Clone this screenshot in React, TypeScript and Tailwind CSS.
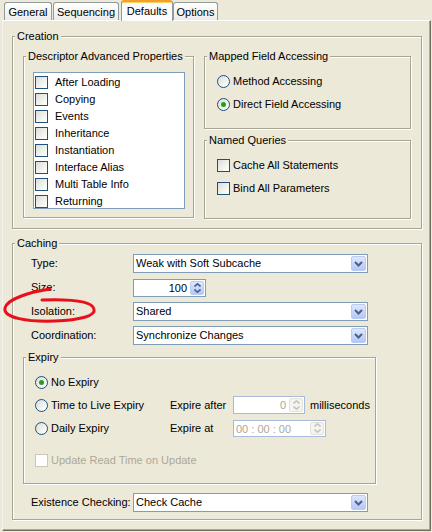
import type { ReactNode } from "react";

const DESCRIPTOR_PROPS = [
  "After Loading",
  "Copying",
  "Events",
  "Inheritance",
  "Instantiation",
  "Interface Alias",
  "Multi Table Info",
  "Returning",
];

function Checkbox({ disabled }: { disabled?: boolean }) {
  if (disabled)
    return <span className="h-[13px] w-[13px] shrink-0 border border-[#cac8bb] bg-white" />;
  return (
    <span className="h-[13px] w-[13px] shrink-0 border border-[#1c5180] bg-linear-to-br from-[#dcdcd7] via-[#f0f0ea] to-white" />
  );
}

function Radio({ checked }: { checked?: boolean }) {
  return (
    <span className="flex h-[13px] w-[13px] shrink-0 items-center justify-center rounded-full border border-[#1c5180] bg-linear-to-br from-[#dcdcd7] via-[#f0f0ea] to-white">
      {checked && <span className="h-[5px] w-[5px] rounded-full bg-[#21a121]" />}
    </span>
  );
}

function Group({
  title,
  className,
  children,
}: {
  title: string;
  className: string;
  children?: ReactNode;
}) {
  return (
    <div
      className={`relative shrink-0 border border-[#a8a596] shadow-[1px_1px_0_#fff,inset_1px_1px_0_#fff] ${className}`}
    >
      <span className="absolute -top-[7px] left-[2px] bg-[#ece9d8] px-[2px] leading-[13px]">
        {title}
      </span>
      {children}
    </div>
  );
}

function Chevron({ up, color }: { up?: boolean; color: string }) {
  return (
    <svg width="7" height="4" viewBox="0 0 7 4">
      <path
        d={up ? "M0.5 3.5 L3.5 0.8 L6.5 3.5" : "M0.5 0.5 L3.5 3.2 L6.5 0.5"}
        fill="none"
        stroke={color}
        strokeWidth="1.6"
      />
    </svg>
  );
}

function Combo({ value }: { value: string }) {
  return (
    <div className="flex h-[19px] w-[235px] shrink-0 border border-[#7f9db9] bg-white p-px">
      <span className="flex-1 pl-[1px] leading-[15px]">{value}</span>
      <span className="flex w-[15px] items-center justify-center rounded-[2px] border border-[#bccbf0] bg-linear-to-b from-[#dde7fe] to-[#b4c8f6]">
        <svg width="9" height="6" viewBox="0 0 9 6">
          <path d="M1 1 L4.5 4.5 L8 1" fill="none" stroke="#4d6185" strokeWidth="2" />
        </svg>
      </span>
    </div>
  );
}

function Spinner({
  value,
  width,
  height,
  disabled,
  left,
}: {
  value: string;
  width: string;
  height: string;
  disabled?: boolean;
  left?: boolean;
}) {
  return (
    <div
      className={`flex shrink-0 border bg-white p-px ${width} ${height} ${
        disabled ? "border-[#a9bbd9] text-[#aca899]" : "border-[#7f9db9]"
      }`}
    >
      <span
        className={`flex-1 leading-[14px] ${left ? "pl-[1px] text-left" : "pr-[3px] text-right"}`}
      >
        {value}
      </span>
      <span
        className={`flex w-[14px] flex-col items-center justify-center gap-[2px] rounded-[2px] border ${
          disabled
            ? "border-[#e3e3dc] bg-[#f4f4f0]"
            : "border-[#bccbf0] bg-linear-to-b from-[#dde7fe] to-[#b4c8f6]"
        }`}
      >
        <Chevron up color={disabled ? "#c9c7ba" : "#4d6185"} />
        <Chevron color={disabled ? "#c9c7ba" : "#4d6185"} />
      </span>
    </div>
  );
}

function FieldRow({ label, children }: { label: string; children: ReactNode }) {
  return (
    <div className="flex h-[19px] items-center">
      <span className="w-[120px] shrink-0 pl-[18px]">{label}</span>
      {children}
    </div>
  );
}

export default function App() {
  return (
    <div className="relative h-[532px] w-[432px] overflow-hidden bg-[#ece9d8] font-['Liberation_Sans',Arial,sans-serif] text-[11px] text-black">
      {/* tab strip */}
      <div className="flex h-[20px] items-end pl-[4px]">
        <div className="h-[18px] w-[48px] rounded-t-[3px] border border-b-0 border-[#919b9c] bg-linear-to-b from-white to-[#ecebe6] pt-[3px] text-center leading-[13px]">
          General
        </div>
        <div className="ml-[1px] h-[18px] w-[66px] rounded-t-[3px] border border-b-0 border-[#919b9c] bg-linear-to-b from-white to-[#ecebe6] pt-[3px] text-center leading-[13px]">
          Sequencing
        </div>
        <div className="relative z-10 -mb-px ml-[2px] h-[21px] w-[52px] rounded-t-[3px] border-x border-t-[2px] border-[#919b9c] border-t-[#f0a030] bg-[#fcfcfe] pt-[3px] text-center leading-[13px] shadow-[inset_0_1px_0_#ffd060]">
          Defaults
        </div>
        <div className="h-[18px] w-[45px] rounded-t-[3px] border border-b-0 border-[#919b9c] bg-linear-to-b from-white to-[#ecebe6] pt-[3px] text-center leading-[13px]">
          Options
        </div>
      </div>

      {/* tab page */}
      <div className="ml-[2px] h-[511px] w-[429px] border border-t-white border-l-[#f4f3ee] border-r-[#716f64] border-b-[#716f64] shadow-[inset_-1px_-1px_0_#aca899]">
        <Group title="Creation" className="ml-[9px] mt-[15px] flex h-[193px] w-[410px] gap-[10px] pl-[10px] pt-[19px]">
          <Group title="Descriptor Advanced Properties" className="h-[162px] w-[171px] pl-[9px] pt-[15px]">
            <div className="h-[137px] w-[152px] border border-[#7f9db9] bg-white pl-px pt-px">
              {DESCRIPTOR_PROPS.map((name) => (
                <div key={name} className="flex h-[17px] items-center gap-[7px]">
                  <Checkbox />
                  <span>{name}</span>
                </div>
              ))}
            </div>
          </Group>

          <div className="flex w-[207px] flex-col gap-[11px]">
            <Group title="Mapped Field Accessing" className="flex h-[73px] flex-col gap-[10px] pl-[12px] pt-[18px]">
              <div className="flex h-[13px] items-center gap-[3px]">
                <Radio />
                <span>Method Accessing</span>
              </div>
              <div className="flex h-[13px] items-center gap-[3px]">
                <Radio checked />
                <span>Direct Field Accessing</span>
              </div>
            </Group>
            <Group title="Named Queries" className="flex h-[79px] flex-col gap-[10px] pl-[12px] pt-[18px]">
              <div className="flex h-[13px] items-center gap-[3px]">
                <Checkbox />
                <span>Cache All Statements</span>
              </div>
              <div className="flex h-[13px] items-center gap-[3px]">
                <Checkbox />
                <span>Bind All Parameters</span>
              </div>
            </Group>
          </div>
        </Group>

        <Group title="Caching" className="ml-[9px] mt-[14px] flex h-[277px] w-[410px] flex-col pt-[10px]">
          <div className="flex flex-col gap-[5px]">
            <FieldRow label="Type:">
              <Combo value="Weak with Soft Subcache" />
            </FieldRow>
            <FieldRow label="Size:">
              <Spinner value="100" width="w-[73px]" height="h-[18px]" />
            </FieldRow>
            <FieldRow label="Isolation:">
              <Combo value="Shared" />
            </FieldRow>
            <FieldRow label="Coordination:">
              <Combo value="Synchronize Changes" />
            </FieldRow>
          </div>

          <Group title="Expiry" className="ml-[10px] mt-[12px] h-[127px] w-[353px] pl-[11px] pt-[18px]">
            <div className="flex h-[13px] items-center gap-[3px]">
              <Radio checked />
              <span>No Expiry</span>
            </div>
            <div className="mt-[7px] flex h-[18px] items-center">
              <div className="flex w-[135px] items-center gap-[3px]">
                <Radio />
                <span>Time to Live Expiry</span>
              </div>
              <span className="w-[63px]">Expire after</span>
              <Spinner value="0" width="w-[72px]" height="h-[18px]" disabled />
              <span className="ml-[5px]">milliseconds</span>
            </div>
            <div className="mt-[5px] flex h-[18px] items-center">
              <div className="flex w-[135px] items-center gap-[3px]">
                <Radio />
                <span>Daily Expiry</span>
              </div>
              <span className="w-[63px]">Expire at</span>
              <Spinner value="00 : 00 : 00" width="w-[93px]" height="h-[17px]" disabled left />
            </div>
            <div className="mt-[17px] flex h-[13px] items-center gap-[3px] text-[#aca899]">
              <Checkbox disabled />
              <span>Update Read Time on Update</span>
            </div>
          </Group>

          <div className="mt-[9px]">
            <FieldRow label="Existence Checking:">
              <Combo value="Check Cache" />
            </FieldRow>
          </div>
        </Group>
      </div>

      {/* hand-drawn red marker around the Isolation label */}
      <svg
        className="pointer-events-none absolute left-0 top-0"
        width="432"
        height="532"
        viewBox="0 0 432 532"
      >
        <path
          d="M50 289 C30 292 7 299 5 308 C3 318 28 322 55 321 C80 320 96 316 94 309 C92 301 70 299 42 300"
          fill="none"
          stroke="#e8101a"
          strokeWidth="3"
          strokeLinecap="round"
        />
      </svg>
    </div>
  );
}
